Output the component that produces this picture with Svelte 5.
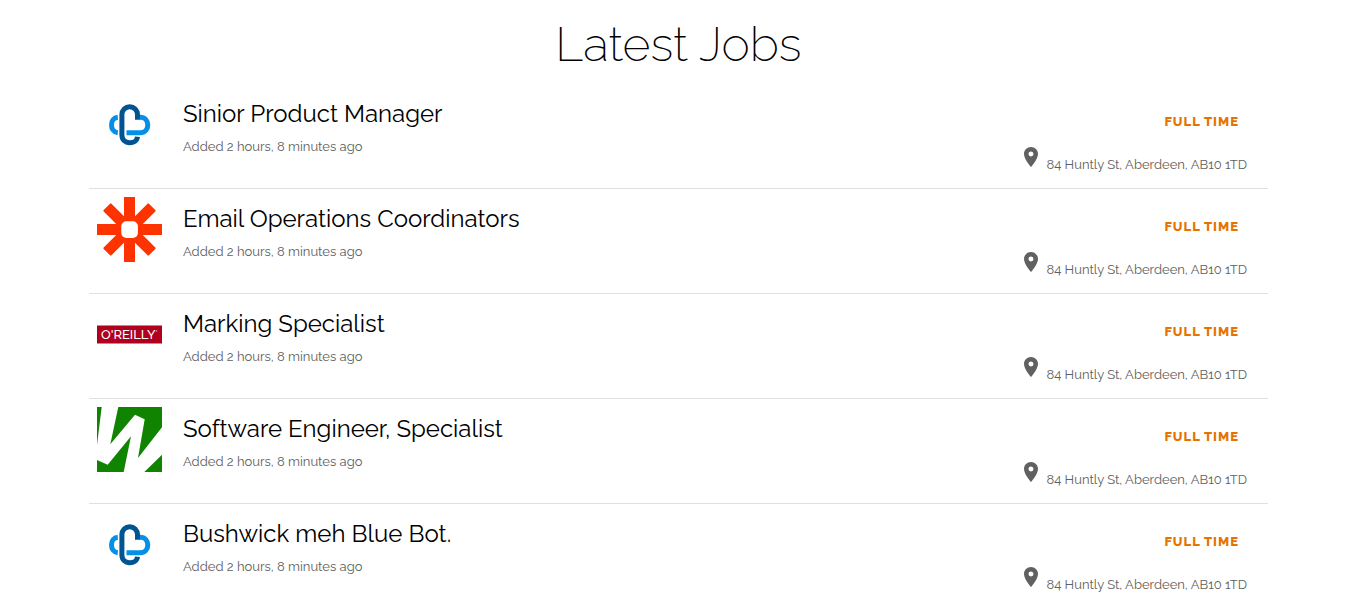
<script>
  const added = 'Added 2 hours, 8 minutes ago';
  const address = '84 Huntly St, Aberdeen, AB10 1TD';

  const jobs = [
    { title: 'Sinior Product Manager', logo: 'cloud' },
    { title: 'Email Operations Coordinators', logo: 'asterisk' },
    { title: 'Marking Specialist', logo: 'oreilly' },
    { title: 'Software Engineer, Specialist', logo: 'stripes' },
    { title: 'Bushwick meh Blue Bot.', logo: 'cloud' }
  ].map((job) => ({ ...job, added, address, type: 'Full time' }));
</script>

{#snippet logo(name)}
  <svg class="logo" viewBox="0 0 65 65" aria-hidden="true">
    {#if name === 'cloud'}
      <g fill="none" stroke-width="5">
        <path stroke="#0590e8" d="M20.8 25.2C12.4 26 12.4 39.9 20.8 40.7M29.5 40.7H43C53.4 40.7 53.4 25.2 43 25.2" />
        <path stroke="#005490" d="M38 25.2H40.5V22.5A7.8 7.8 0 0 0 24.9 22.5V43C24.9 53 39.5 53 40.5 44.7" />
      </g>
    {:else if name === 'asterisk'}
      <g fill="#ff3300">
        {#each [0, 45, 90, 135] as angle}
          {@const reach = angle % 90 ? 32 : 33}
          <rect
            x="27"
            y={32.5 - reach}
            width="11"
            height={reach * 2}
            rx="1"
            transform="rotate({angle} 32.5 32.5)"
          />
        {/each}
      </g>
      <rect x="24.3" y="24.3" width="16.6" height="16.6" rx="5" fill="#fff" />
    {:else if name === 'oreilly'}
      <rect y="23.5" width="65" height="18" fill="#b0001f" />
      <text x="4" y="37" class="wordmark">O'REILLY</text>
      <circle cx="59.5" cy="29" r="0.8" fill="#e9a5b0" />
    {:else}
      <rect width="65" height="65" fill="#108400" />
      <path
        fill="#fff"
        d="M4.7 0H21.3L13.3 37.3L38 7.7L47.7 12.3L41 51L65 20.3V47.7L47.3 65H26.7L34 29.3L10.7 57.7L0 53V38Z"
      />
    {/if}
  </svg>
{/snippet}

<section class="jobs">
  <h1>Latest Jobs</h1>

  <ul>
    {#each jobs as job}
      <li>
        {@render logo(job.logo)}
        <div class="summary">
          <h2><a href="#job">{job.title}</a></h2>
          <p>{job.added}</p>
        </div>
        <div class="details">
          <span class="type">{job.type}</span>
          <p class="location">
            <svg class="pin" viewBox="0 0 24 24" aria-hidden="true">
              <path
                d="M12 2C8.13 2 5 5.13 5 9c0 5.25 7 13 7 13s7-7.75 7-13c0-3.87-3.13-7-7-7zm0 9.5a2.5 2.5 0 0 1 0-5 2.5 2.5 0 0 1 0 5z"
              />
            </svg>
            {job.address}
          </p>
        </div>
      </li>
    {/each}
  </ul>
</section>

<style>
  :global(body) {
    background: #fff;
  }

  .jobs {
    padding: 12px 93px 0 89px;
    font-family: Raleway, Lato, sans-serif;
    color: #000;
  }

  h1 {
    margin: 0 0 8px;
    font-size: 48px;
    font-weight: 200;
    line-height: 64px;
    text-align: center;
  }

  ul {
    margin: 0;
    padding: 0;
    list-style: none;
  }

  li {
    display: flex;
    gap: 21px;
    box-sizing: border-box;
    min-height: 105px;
    padding: 8px;
    border-bottom: 1px solid #e0e0e0;
  }

  .logo {
    flex: none;
    width: 65px;
    height: 65px;
  }

  .wordmark {
    font: 500 13px Raleway, 'Open Sans', sans-serif;
    fill: #fff;
  }

  .summary {
    flex: 1;
    padding-top: 6px;
  }

  h2 {
    margin: 0;
    font-size: 24px;
    font-weight: 400;
    line-height: 32px;
  }

  h2 a {
    color: inherit;
    text-decoration: none;
  }

  p {
    margin: 0;
    font-size: 13px;
    line-height: 20px;
    color: #606060;
  }

  .summary p {
    padding-top: 7px;
  }

  .details {
    display: flex;
    flex-direction: column;
    align-items: flex-end;
    padding: 20px 13px 0 0;
  }

  .type {
    padding-right: 8px;
    font-size: 13px;
    font-weight: 800;
    line-height: 20px;
    letter-spacing: 1px;
    text-transform: uppercase;
    color: #e67300;
  }

  .location {
    display: flex;
    align-items: flex-end;
    gap: 4px;
    padding-top: 13px;
  }

  .pin {
    width: 24px;
    height: 24px;
    margin-bottom: 6px;
    fill: #616161;
  }
</style>
